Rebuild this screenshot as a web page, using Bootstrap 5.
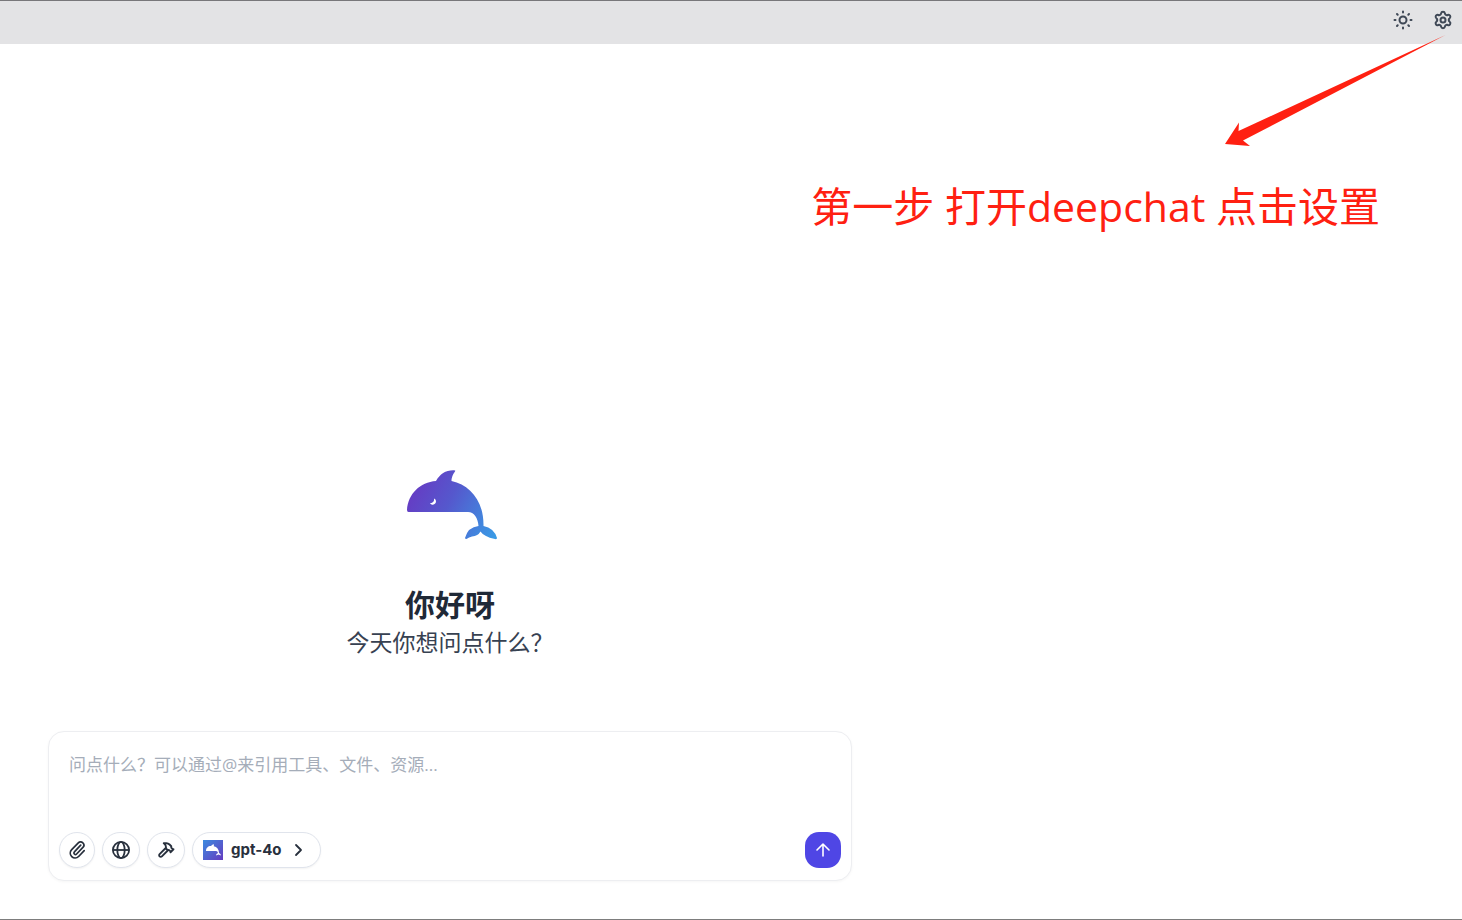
<!DOCTYPE html>
<html lang="zh-CN">
<head>
<meta charset="utf-8">
<meta name="viewport" content="width=device-width, initial-scale=1">
<title>DeepChat</title>
<link href="https://cdn.jsdelivr.net/npm/bootstrap@5.3.0/dist/css/bootstrap.min.css" rel="stylesheet">
<style>
  body { font-family: "Open Sans", "Noto Sans CJK SC", sans-serif; color: #1f2937; background: #fff; border-top: 1px solid #78777a; border-bottom: 1px solid #7d7d7d; }
  svg { display: block; }
  .titlebar { height: 43px; background: #e3e3e5; padding: 0 9px 6px; gap: 20px; }
  .titlebar button { color: #3f4856; padding: 0; border: 0; }
  .step-arrow { right: 16px; top: 34px; z-index: 2; pointer-events: none; }
  .step-note { color: #ff2011; font-size: 41px; line-height: 56px; margin: 134px 82px 0 0; }
  .chat-pane { max-width: 900px; padding: 0 48px 38px; }
  .greeting { font-size: 30px; line-height: 36px; margin: 47px 0 2px; }
  .greeting-sub { font-size: 23px; line-height: 34px; margin-bottom: 72px; color: #374151; }
  .composer { border: 1px solid #edeef1; border-radius: 16px; box-shadow: 0 1px 3px #0000000a; }
  .composer textarea { font-size: 17px; line-height: 26px; height: 100px; padding: 20px 20px 0; resize: none; }
  .composer textarea::placeholder { color: #a5adb9; opacity: 1; }
  .tools { padding: 0 10px 12px; gap: 7px; }
  .tool-btn { height: 36px; padding: 0 9px; border: 1px solid #e0e4ec; border-radius: 18px; background: #fff; color: #28303d; box-shadow: 0 1px 2px #0000000d; }
  .model-btn { padding: 0 14px 0 10px; }
  .model-name { font: 700 15px/20px Inter, sans-serif; }
  .send-btn { width: 36px; height: 36px; border-radius: 14px; background: #4f46e5; color: #fff; }
</style>
</head>
<body class="min-vh-100 d-flex flex-column position-relative">
<header class="titlebar d-flex align-items-center justify-content-end">
  <button type="button" class="btn" aria-label="主题">
    <svg width="20" height="20" viewBox="0 0 20 20" fill="none" stroke="currentColor" stroke-width="2" stroke-linecap="round"><circle cx="10" cy="10" r="3.500"/><path d="M10 1.500v1M10 17.500v1M1.500 10h1M17.500 10h1M4 4l.7.700M15.300 15.300l.7.700M16 4l-.7.700M4.700 15.300l-.7.700"/></svg>
  </button>
  <button type="button" class="btn" aria-label="设置">
    <svg width="20" height="20" viewBox="0 0 24 24" fill="none" stroke="currentColor" stroke-width="2.400" stroke-linejoin="round" stroke-linecap="round"><path d="M9.700 4.100a2.340 2.340 0 0 1 4.600 0 2.340 2.340 0 0 0 3.400 1.900 2.340 2.340 0 0 1 2.300 4 2.340 2.340 0 0 0 0 4 2.340 2.340 0 0 1-2.300 4 2.340 2.340 0 0 0-3.400 1.900 2.340 2.340 0 0 1-4.600 0 2.340 2.340 0 0 0-3.400-1.900 2.340 2.340 0 0 1-2.300-4 2.340 2.340 0 0 0 0-4 2.340 2.340 0 0 1 2.300-4 2.340 2.340 0 0 0 3.400-1.900"/><circle cx="12" cy="12" r="3"/></svg>
  </button>
</header>
<svg class="step-arrow position-absolute" width="222" height="112" viewBox="0 0 222 112" aria-hidden="true"><path fill="#ff2011" d="M221.500 0 14.500 96 15 87.500 1 109 26 111 19 105.500Z"/></svg>
<main class="flex-grow-1 d-flex flex-column">
  <p class="step-note text-end">第一步 打开deepchat 点击设置</p>
  <section class="chat-pane w-100 mt-auto">
    <div class="text-center">
      <svg class="mx-auto" width="94" height="70" viewBox="-4 0 94 70" role="img" aria-label="DeepChat">
        <defs><linearGradient id="whale" gradientUnits="userSpaceOnUse" x1="5" y1="22" x2="88" y2="66"><stop offset="0" stop-color="#653dc4"/><stop offset=".4" stop-color="#5558cd"/><stop offset="1" stop-color="#3a9ae5"/></linearGradient></defs>
        <path fill="url(#whale)" d="M1.500 42Q0 42 0 40C1 24 13 12 29 11 33 4 39 0 47 .3Q49 .3 48 1.500 44.500 6 44.500 11C63 15 77 31 76.500 56Q87 58 90 68 90 69.500 88 69 82 68 79 66 75 64 73.500 61.500 71 66 65 66.500 62 67 59.500 69 58 69 58 68 61 57 71.500 56C71 48 67 42 61 42Z"/>
        <path fill="#fff" d="M27 28.500a3.200 3.200 0 1 1-4 4.500c2.500.3 4.500-1.500 4-4.500Z"/>
      </svg>
      <h1 class="greeting fw-bold">你好呀</h1>
      <p class="greeting-sub">今天你想问点什么？</p>
    </div>
    <form class="composer bg-white">
      <textarea class="form-control border-0 bg-transparent shadow-none" aria-label="消息" placeholder="问点什么？可以通过@来引用工具、文件、资源..."></textarea>
      <div class="tools d-flex align-items-center">
        <button type="button" class="tool-btn" aria-label="附件"><svg width="16" height="20" viewBox="0 0 16 20" fill="none" stroke="currentColor" stroke-width="1.700" stroke-linecap="round" stroke-linejoin="round"><path d="m12.500 6-6.300 6.600a1.500 1.500 0 0 0 2.200 2.200l6.300-6.600a3.200 3.200 0 0 0-4.600-4.500L3.500 10.500a4.800 4.800 0 0 0 6.900 6.800L16 11.500" transform="translate(-.8 -.8)"/></svg></button>
        <button type="button" class="tool-btn" aria-label="联网搜索"><svg width="18" height="20" viewBox="0 0 18 20" fill="none" stroke="currentColor" stroke-width="1.800"><circle cx="9" cy="10" r="8.100"/><ellipse cx="9" cy="10" rx="3.700" ry="8.100"/><path d="M1 10h16"/></svg></button>
        <button type="button" class="tool-btn" aria-label="工具"><svg width="18" height="20" viewBox="0 0 24 26" fill="none" stroke="currentColor" stroke-width="2.500" stroke-linecap="round" stroke-linejoin="round"><path d="m15 13-8.500 8.500a2.100 2.100 0 1 1-3-3L12 10M18 16l4-4M21.500 12.500l-1.900-1.900A2 2 0 0 1 19 9.200V8l-2.300-2.300a6 6 0 0 0-4.200-1.700H9l.9.800A6.200 6.200 0 0 1 12 9.400V11l2 2h1.200a2 2 0 0 1 1.400.6l1.900 1.900"/></svg></button>
        <button type="button" class="tool-btn model-btn d-flex align-items-center">
          <svg width="20" height="20" viewBox="0 0 20 20" aria-hidden="true"><defs><linearGradient id="tile" x1="0" y1="0" x2="1" y2="1"><stop stop-color="#3c8bdf"/><stop offset="1" stop-color="#653bc0"/></linearGradient></defs><path fill="url(#tile)" d="M0 0h20v20H0z"/><path fill="#fff" d="M3 11C3 8 5 6 8 6Q9 4.500 11 4.300L10.800 6.300C14 7 16 9.500 16 13Q17.800 13.500 18 15.500L15.500 14.500 13 15.500Q13 13.500 15 13 14.700 11 13 11Z"/></svg>
          <span class="model-name ms-2 me-2">gpt-4o</span>
          <svg width="16" height="16" viewBox="0 0 16 16" fill="none" stroke="currentColor" stroke-width="1.800" stroke-linecap="round" stroke-linejoin="round" aria-hidden="true"><path d="m6 3 5 5-5 5"/></svg>
        </button>
        <button type="submit" class="send-btn btn border-0 p-0 ms-auto d-flex align-items-center justify-content-center" aria-label="发送"><svg width="16" height="16" viewBox="0 0 16 16" fill="none" stroke="currentColor" stroke-width="1.600" stroke-linecap="round" stroke-linejoin="round"><path d="M8 14V2M2 8l6-6 6 6"/></svg></button>
      </div>
    </form>
  </section>
</main>
<script src="https://cdn.jsdelivr.net/npm/bootstrap@5.3.0/dist/js/bootstrap.bundle.min.js"></script>
</body>
</html>
